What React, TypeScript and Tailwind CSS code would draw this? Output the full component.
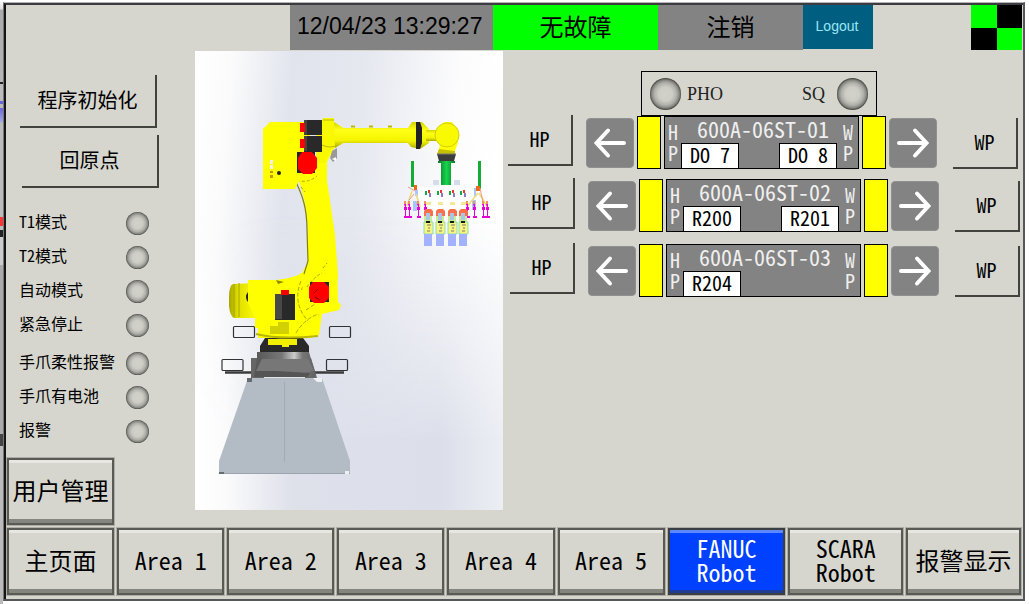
import React from "react";

const HEI = "font-['Noto_Sans_Mono_CJK_SC','DejaVu_Sans_Mono','Noto_Sans_CJK_SC',monospace]";

function Lamp({ label, large }: { label: string; large?: boolean }) {
  return (
    <span
      role="img"
      aria-label={label}
      className={
        "block shrink-0 rounded-full bg-[radial-gradient(circle_closest-side_at_center,#d2d2cb_0%,#cdcdc6_45%,#b0b0aa_72%,#85857f_90%,#4c4c49_100%)] " +
        (large ? "h-8 w-[31px]" : "h-[23px] w-[23px]")
      }
    />
  );
}

function FlatButton({ children, className = "" }: { children: React.ReactNode; className?: string }) {
  return (
    <button
      type="button"
      className={"flex shrink-0 items-center justify-center border-r-2 border-b-2 border-[#42423e] pb-px text-xl leading-6 " + className}
    >
      {children}
    </button>
  );
}

function NavButton({ children, active, className = "" }: { children: React.ReactNode; active?: boolean; className?: string }) {
  return (
    <button
      type="button"
      className={
        "flex min-w-0 items-center justify-center border-2 pb-[3px] text-2xl leading-6 outline-1 outline-[#aeaea6] " +
        (active
          ? "border-[#3c3f41] bg-[#0040ff] text-white shadow-[inset_0_3px_0_#5c88ff,inset_0_-3px_0_#1d3d96] "
          : "border-[#5a5a55] bg-[#d6d6ce] shadow-[inset_0_3px_0_#e8e8e3,inset_0_-4px_0_#85857f] ") +
        className
      }
    >
      <span className="text-center whitespace-pre">{children}</span>
    </button>
  );
}

function ArrowButton({ dir }: { dir: "left" | "right" }) {
  return (
    <button
      type="button"
      aria-label={dir === "left" ? "向左" : "向右"}
      className="flex h-[50px] w-12 shrink-0 items-center justify-center rounded-[4px] border border-[#90908e] bg-[#838383]"
    >
      <svg viewBox="0 0 48 50" className="h-[50px] w-12 shrink-0" fill="none" stroke="#fff" strokeWidth="4" strokeLinecap="round">
        {dir === "left" ? <path d="M38 25H11M22 12.500L10.500 25L22 37.500" /> : <path d="M10 25H37M26 12.500L37.500 25L26 37.500" />}
      </svg>
    </button>
  );
}

function Station({ name, left, right }: { name: string; left: string; right?: string }) {
  return (
    <div className="flex h-[53px] w-[195px] shrink-0 justify-between border border-black bg-[#838383] px-[3px] text-[#efefef]">
      <div className="w-3 pt-1 text-xl leading-[21px] break-all">HP</div>
      <div className="flex flex-1 flex-col justify-between">
        <div className="pl-[3px] text-center text-[22px] leading-[22px] whitespace-nowrap">{name}</div>
        <div className="flex justify-between pr-[6px] pl-px text-xl leading-[22px] text-black">
          <span className="-mb-px flex h-[26px] w-[58px] items-start justify-center border border-black bg-white whitespace-pre">{left}</span>
          {right && (
            <span className="-mb-px flex h-[26px] w-[58px] items-start justify-center border border-black bg-white whitespace-pre">{right}</span>
          )}
        </div>
      </div>
      <div className="w-3 pt-1 text-xl leading-[21px] break-all">WP</div>
    </div>
  );
}

function StationRow(props: { name: string; left: string; right?: string }) {
  return (
    <div className="flex">
      <FlatButton className="-mt-px h-[51px] w-[65px]">HP</FlatButton>
      <div className="ml-[13px] flex gap-[3px]">
        <div className="pt-[2px]"><ArrowButton dir="left" /></div>
        <div className="h-[53px] w-6 border border-black bg-[#ffff00]" />
        <Station {...props} />
        <div className="h-[53px] w-6 border border-black bg-[#ffff00]" />
        <div className="pt-[2px]"><ArrowButton dir="right" /></div>
      </div>
      <FlatButton className="mt-[2px] ml-4 h-[51px] w-[65px]">WP</FlatButton>
    </div>
  );
}

function Robot() {
  const grips = [424, 436, 448, 459];
  const clamps = [405, 409, 418, 425, 467, 474, 483, 487];
  return (
    <svg viewBox="195 51 308 459" className="block h-[459px] w-[308px]" role="img" aria-label="FANUC Robot">
      <defs>
        <linearGradient id="sky" x1="0" y1="0" x2="1" y2="0.12">
          <stop offset="0" stopColor="#fff" />
          <stop offset="0.12" stopColor="#fbfbfc" />
          <stop offset="0.32" stopColor="#e1e4ed" />
          <stop offset="0.55" stopColor="#e6e8f0" />
          <stop offset="0.85" stopColor="#fcfcfd" />
          <stop offset="1" stopColor="#fff" />
        </linearGradient>
        <linearGradient id="floor" x1="0" y1="0" x2="1" y2="0">
          <stop offset="0" stopColor="#fff" />
          <stop offset="0.1" stopColor="#fbfbfc" />
          <stop offset="0.32" stopColor="#dee0ea" />
          <stop offset="0.8" stopColor="#dcdfea" />
          <stop offset="1" stopColor="#eceef4" />
        </linearGradient>
        <linearGradient id="fade" x1="0" y1="0" x2="0" y2="1">
          <stop offset="0.35" stopColor="#fff" stopOpacity="0" />
          <stop offset="0.85" stopColor="#fff" />
        </linearGradient>
        <mask id="low"><rect x="195" y="51" width="308" height="459" fill="url(#fade)" /></mask>
        <linearGradient id="tube" x1="0" y1="0" x2="0" y2="1">
          <stop offset="0" stopColor="#d2d200" />
          <stop offset="0.3" stopColor="#ffff16" />
          <stop offset="0.7" stopColor="#f5f500" />
          <stop offset="1" stopColor="#aaa600" />
        </linearGradient>
        <linearGradient id="motor" x1="0" y1="0" x2="1" y2="0">
          <stop offset="0" stopColor="#a8a400" />
          <stop offset="0.3" stopColor="#e0dd00" />
          <stop offset="1" stopColor="#ffff00" />
        </linearGradient>
        <linearGradient id="steel" x1="0" y1="0" x2="1" y2="0">
          <stop offset="0" stopColor="#555" />
          <stop offset="0.45" stopColor="#777" />
          <stop offset="0.65" stopColor="#ccc" />
          <stop offset="0.78" stopColor="#777" />
          <stop offset="1" stopColor="#606060" />
        </linearGradient>
        <linearGradient id="green" x1="0" y1="0" x2="1" y2="0">
          <stop offset="0" stopColor="#087c28" />
          <stop offset="0.5" stopColor="#16d44c" />
          <stop offset="1" stopColor="#087c28" />
        </linearGradient>
      </defs>
      <rect x="195" y="51" width="308" height="459" fill="url(#sky)" />
      <rect x="195" y="51" width="308" height="459" fill="url(#floor)" mask="url(#low)" />

      {/* pedestal */}
      <path d="M248 378H322L350 461V474H219V461Z" fill="#b3bbc4" />
      <path d="M284.500 382V462" stroke="#a2aab3" />
      <path d="M219 473.500H350" stroke="#9ba3ac" />
      <path d="M247 378h5v4h-5zM219 472h5v2h-5z" fill="#656b70" />
      <path d="M313 378h9v4h-5zM345 471h4v3h-4z" fill="#eef1f4" />

      {/* turntable */}
      <path d="M225 372.500H251M313 372.500H344" stroke="#3b3b3b" strokeWidth="2.500" />
      <path d="M251 358H311L317 378H251Z" fill="#666" />
      <path d="M257 352H309L311 359L316 375L310 377H254L257 359Z" fill="url(#steel)" />
      <path d="M262 359H308L314 371Q284 376 256 371Z" fill="#777" />
      <path d="M256 371L276 371L310 373L308 377H254Z" fill="#555" />
      <path d="M265 338H303L309 346V352H260V346Z" fill="#292929" />
      <path d="M264 377.500H305" stroke="#e2e5e8" />
      <g fill="none" stroke="#303236" strokeWidth="1.200">
        <rect x="233.500" y="326.500" width="21" height="11" rx="1" />
        <rect x="329.500" y="326.500" width="21" height="11" rx="1" />
        <rect x="222" y="359.500" width="21" height="11" rx="1" />
        <rect x="326.500" y="359.500" width="21" height="11" rx="1" />
      </g>

      {/* base casting */}
      <path d="M233 284Q229 286 229 297V306Q230 316 234 318H258V283Z" fill="url(#motor)" />
      <path d="M234 284V317M239 283V317" stroke="#aaa500" />
      <path d="M248 292Q244 297 248 302Z" fill="#202020" />
      <path d="M248 280H276Q296 278 303 272L304 268L337 258L338 302L341 305L339 310L322 314L319 335L310 338H258V328H255V318L248 303Z" fill="#ffff00" />
      <path d="M276 280L284 282L278 284Z" fill="#8c8b00" />
      <path d="M270 326H278V322H289V334H270Z" fill="#d3d000" />
      <path d="M256 334Q280 340 318 336" stroke="#bab700" strokeWidth="2" fill="none" />
      <path d="M268 339H297V345H289V347H282V345H268Z" fill="#f2f000" />
      <path d="M301 281Q292 303 308 321M313 280Q303 282 301 292M306 310L315 304M296 333Q305 318 319 314" fill="none" stroke="#a8a600" strokeDasharray="4 2" />
      <path d="M275 294H295V320H275Z" fill="#292929" />
      <path d="M275 294H282V319H275Z" fill="#484848" />
      <path d="M281 290H289V295H281Z" fill="#f50000" />

      {/* lower arm */}
      <path d="M296 174C303 190 307 207 308 230V262Q306 272 301 276L303 291H334L338 277L335 235L327 180V162L337 142L324 120H318V163L300 175Z" fill="#ffff00" />
      <path d="M296 182C302 195 307 207 307 230L308 261L304 274" fill="none" stroke="#848200" strokeWidth="1.200" />
      <path d="M297 180Q307 184 317 176M301 187L305 192M323 268L327 263M307 287Q314 277 322 273" fill="none" stroke="#a8a600" strokeDasharray="3 2" />
      <path d="M310 282H329V302H310Z" fill="#282828" />
      <path d="M313 282H324L329 287V298L324 303H314L309 298V287Z" fill="#ff0000" />
      <path d="M314 293L318 289M315 297L320 300" stroke="#800" />

      {/* elbow and counterweight box */}
      <path d="M270 122H310V176L298 182L295 189H263V129Z" fill="#ffff00" />
      <path d="M270 160h3v4h-3zM270 165h3v4h-3z" fill="#f2f2ed" />
      <path d="M270 171h3v2h-3zM270 175h3v3h-3z" fill="#cf9200" />
      <circle cx="279" cy="173" r="2" fill="#222" />
      <path d="M332 151L337 148V158L333 162L330 158Z" fill="#999" />
      <path d="M332 159L336 157V161Z" fill="#fff" />
      <path d="M317 121H322L323 118H334V122L345 129V142L331 150L325 163H316Z" fill="#f8f800" />
      <path d="M323 120H334M322 145Q330 149 338 145" fill="none" stroke="#bdb900" />
      <path d="M304 120H322V135H304ZM304 136H322V152H304Z" fill="#292929" />
      <path d="M304 120H307V135H304ZM304 136H307V151H304Z" fill="#444" />
      <path d="M300 123h5v9h-5zM300 139h5v9h-5z" fill="#f00" />
      <path d="M297 152H315V173H297Z" fill="#252525" />
      <path d="M302 152H312L317 158V168L312 174H303L298 169V158Z" fill="#ff0000" />

      {/* forearm */}
      <path d="M334 122L343 128H408V143H343L335 148Z" fill="url(#tube)" />
      <path d="M351 126.500H355M369 126.500H373M388 126.500H392" stroke="#bdb900" strokeWidth="2" />
      <path d="M408 128L412 122H422L429 129V143L420 149L411 147L407 142Z" fill="url(#tube)" />
      <path d="M416 122H420L422 128V143L420 149H416Z" fill="#222" />
      <path d="M426 130H438V141H426Z" fill="url(#tube)" />
      <path d="M438 130L444 122H452L458 130V142L454 154H438L440 144L436 139Z" fill="#ffff00" />
      <circle cx="447" cy="135" r="12" fill="#f9f900" stroke="#d4d000" />
      <path d="M437 154L439 149L455 151V156Z" fill="#c5c000" />
      <path d="M437 154H456L454 161H439Z" fill="#3c3c3c" />
      <path d="M437 154H456" stroke="#777" />

      {/* gripper */}
      <path d="M438 161H455V163H451V185H441V163H438Z" fill="url(#green)" />
      <path d="M411 161h3v26h-3zM478 161h3v28h-3z" fill="#13ad36" />
      <path d="M415 187H477L468 214H424Z" fill="#fff" />
      <path d="M433 180h6v5h-6zM454 180h6v5h-6z" fill="#d5ddeb" />
      <path d="M414 185h3v5h-3zM476 186h4v5h-4z" fill="#ea6919" />
      <path d="M415 190h3v6h-3zM474 188h2v8h-2zM413 201h4v10h-4zM472 200h4v10h-4z" fill="#a9c7ff" />
      <path d="M412 191L407 206M416 194L420 207M478 193L466 208M479 193L488 208" stroke="#ebdc78" strokeWidth="1.500" />
      <path d="M408 187L415 191M409 200L414 194M480 188L484 207" stroke="#ef9b80" />
      {clamps.map((x) => (
        <g key={x}>
          <path d={`M${x - 1} 201h2v4h-2z`} fill="#f09160" />
          <path d={`M${x - 1} 204h2v3h1v3h-1v6h2v2h-4v-2h1v-6h-1v-3h1z`} fill="#e500da" />
        </g>
      ))}
      {grips.map((x) => (
        <g key={x}>
          <path d={`M${x + 1} 191h2v4h-2z`} fill="#19a848" />
          <path d={`M${x + 4} 190h2v3h-2z`} fill="#e83828" />
          <path d={`M${x + 5} 193h2v4h-2z`} fill="#8b7bc0" />
          <path d={`M${x + 2} 202h5v3h-5z`} fill="#f6e796" />
          <path d={`M${x} 211l2-2h5l2 2v5h-9z`} fill="#fa704b" />
          <path d={`M${x} 216h8v7h-8z`} fill="#c8ed8f" />
          <path d={`M${x + 2} 213h4v7h-4z`} fill="#abc5e9" />
          <path d={`M${x} 222h9v12h-9z`} fill="#f6f67e" stroke="#8cddb0" />
          <path d={`M${x + 2} 221h4v2h-4z`} fill="#171717" />
          <path d={`M${x + 3} 225h4M${x + 4} 228h2M${x + 3} 231h3`} stroke="#777" />
          <path d={`M${x} 234h8v12h-8z`} fill="#a2b2ff" />
        </g>
      ))}
    </svg>
  );
}

const modes = ["T1模式", "T2模式", "自动模式", "紧急停止"];
const alarms = ["手爪柔性报警", "手爪有电池", "报警"];

function LampRow({ label }: { label: string }) {
  return (
    <li className="flex h-[34px] items-center justify-between">
      <span className="pb-[5px] whitespace-nowrap">{label}</span>
      <Lamp label={label} />
    </li>
  );
}

export default function App() {
  return (
    <div className={"flex min-h-screen bg-white text-black " + HEI}>
      <div className="w-[3px] shrink-0 bg-[linear-gradient(#fff_0px,#ddd_9px,#aaa_10px,#b6b6b6_82px,#222_82px,#222_84px,#bbb_84px,#bbb_101px,#6565e0_101px,#6565e0_104px,#bbb_104px,#bbb_108px,#6565e0_108px,#a7a7df_122px,#bbb_123px,#bbb_217px,#f33_217px,#f33_226px,#bbb_226px,#bbb_230px,#222_230px,#222_237px,#ccc_237px,#ccc_265px,#aaa_265px,#aaa_434px,#444_434px,#444_446px,#bbb_446px)]" />
      <div className="mt-[2px] mr-1 mb-[3px] flex min-w-0 flex-1 flex-col border-t border-r-2 border-b-2 border-l border-t-[#b5b5b5] border-r-[#55585a] border-b-[#55585a] border-l-[#777]">
        <div className="flex flex-1 flex-col border-t-2 border-l-2 border-t-[#3c3c40] border-l-[#151518] bg-[#d6d6ce]">
          <header className="flex h-[46px] items-start pr-px pl-[284px]">
            <time className="flex h-[45px] w-[203px] shrink-0 items-center bg-[#838383] pb-[3px] pl-[7px] font-['Liberation_Sans',Arial,sans-serif] text-[23px] whitespace-nowrap">
              12/04/23 13:29:27
            </time>
            <div className="flex h-[45px] w-[165px] shrink-0 items-center justify-center bg-[#00ff00] pb-[3px] text-2xl">无故障</div>
            <div className="flex h-[45px] w-[145px] shrink-0 items-center justify-center bg-[#838383] pb-[3px] text-2xl">注销</div>
            <button type="button" className="h-11 w-[70px] shrink-0 bg-[#005f80] pr-[2px] pb-[2px] font-['Liberation_Sans',Arial,sans-serif] text-sm text-[#9be5f5]">
              Logout
            </button>
            <div className="ml-auto grid h-[45px] w-[51px] shrink-0 grid-cols-2 grid-rows-2">
              <span className="bg-[#00ff00]" />
              <span className="bg-black" />
              <span className="bg-black" />
              <span className="bg-[#00ff00]" />
            </div>
          </header>

          <main className="flex flex-1">
            <section className="flex w-[189px] shrink-0 flex-col pt-6">
              <div className="flex flex-col gap-[7px] pl-[14px]">
                <FlatButton className="h-[53px] w-[137px]">程序初始化</FlatButton>
                <FlatButton className="ml-[2px] h-[53px] w-[137px]">回原点</FlatButton>
              </div>
              <ul className="mt-[18px] mr-[46px] ml-[13px] text-base leading-5">
                {modes.map((m) => <LampRow key={m} label={m} />)}
              </ul>
              <ul className="mt-1 mr-[46px] ml-[13px] text-base leading-5">
                {alarms.map((m) => <LampRow key={m} label={m} />)}
              </ul>
              <NavButton className="mt-auto mb-[3px] ml-px h-[67px] w-[107px]">用户管理</NavButton>
            </section>

            <div className="w-[308px] shrink-0"><Robot /></div>

            <section className="min-w-0 flex-1 pt-5">
              <div className="pl-[5px]">
                <div className="ml-[133px] flex h-[45px] w-[236px] items-center border border-black px-2 font-['Liberation_Serif',serif] text-lg text-[#222]">
                  <Lamp label="PHO" large />
                  <span className="ml-[6px]">PHO</span>
                  <span className="mr-3 ml-auto">SQ</span>
                  <Lamp label="SQ" large />
                </div>
                <StationRow name="600A-06ST-01" left="DO 7" right="DO 8" />
              </div>
              <div className="mt-[10px] flex flex-col gap-3 pl-[7px]">
                <StationRow name="600A-06ST-02" left="R200" right="R201" />
                <StationRow name="600A-06ST-03" left="R204" />
              </div>
            </section>
          </main>

          <nav className="flex h-[71px] shrink-0 gap-[3px] pr-[2px] pb-1 pl-px">
            <NavButton className="flex-[107_1_0]">主页面</NavButton>
            <NavButton className="flex-[107_1_0]">Area 1</NavButton>
            <NavButton className="flex-[107_1_0]">Area 2</NavButton>
            <NavButton className="flex-[107_1_0]">Area 3</NavButton>
            <NavButton className="flex-[107_1_0]">Area 4</NavButton>
            <NavButton className="flex-[107_1_0]">Area 5</NavButton>
            <NavButton active className="flex-[118_1_0]">{"FANUC\nRobot"}</NavButton>
            <NavButton className="flex-[115_1_0]">{"SCARA\nRobot"}</NavButton>
            <NavButton className="flex-[115_1_0]">报警显示</NavButton>
          </nav>
        </div>
      </div>
    </div>
  );
}
